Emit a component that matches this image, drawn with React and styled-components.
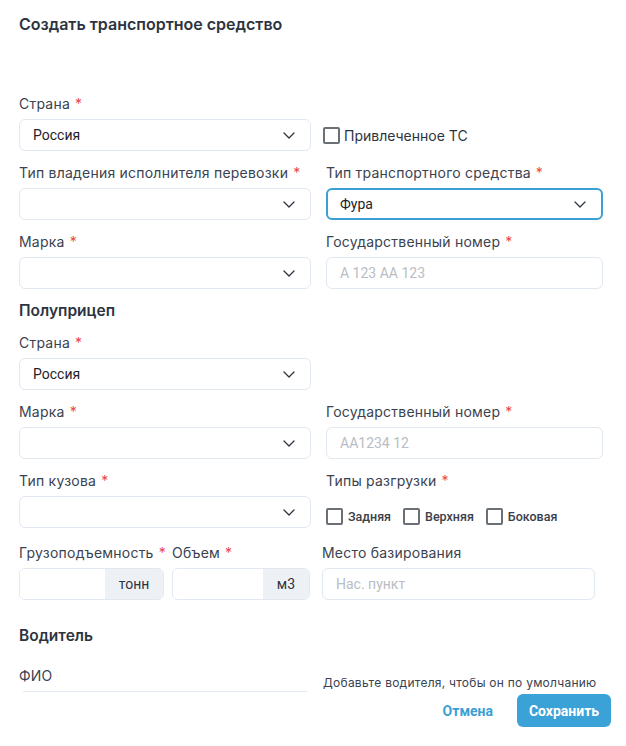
import React from "react";
import styled, { createGlobalStyle } from "styled-components";

const Global = createGlobalStyle`
  html, body { margin: 0; padding: 0; background: #fff; }
  body { font-family: Roboto, "Noto Sans", Arial, sans-serif; }
  * { box-sizing: border-box; }
`;

const Page = styled.div`
  width: 626px;
  height: 746px;
  display: flex;
  flex-direction: column;
  background: #fff;
  overflow: hidden;
`;

const Title = styled.h1`
  margin: 0;
  padding: 14px 19px 0;
  font-family: Inter, Roboto, sans-serif;
  font-size: 16px;
  line-height: 20px;
  font-weight: 600;
  color: #2d3440;
`;

const Body = styled.div`
  flex: 1;
  overflow: hidden;
  padding: 60px 23px 0 19px;
  display: flex;
  flex-direction: column;
  gap: 12px;
`;

const Row = styled.div`
  display: grid;
  grid-template-columns: ${(p) => p.$cols || "292px 277px"};
  column-gap: ${(p) => p.$gap || "15px"};
`;

const Field = styled.div`
  display: flex;
  flex-direction: column;
  min-width: 0;
`;

const Label = styled.label`
  display: block;
  font-family: Inter, Roboto, sans-serif;
  font-size: 14px;
  line-height: 20px;
  letter-spacing: 0.22px;
  color: #3b4250;
  margin-bottom: 5px;
  white-space: nowrap;
`;

const Star = styled.span`
  color: #e5484d;
  margin-left: 5px;
`;

const SelectBox = styled.div`
  height: 32px;
  border: ${(p) => (p.$focused ? "2px solid #3a9fd5" : "1px solid #e2e8f0")};
  border-radius: 6px;
  display: flex;
  align-items: center;
  justify-content: space-between;
  padding: 0 15px 0 ${(p) => (p.$focused ? "12px" : "13px")};
  font-size: 14px;
  color: #1f2329;
  background: #fff;
`;

const TextInput = styled.input`
  height: 32px;
  width: 100%;
  border: 1px solid #e2e8f0;
  border-radius: 6px;
  padding: 0 13px;
  font-family: inherit;
  font-size: 14px;
  color: #1f2329;
  outline: none;
  &::placeholder { color: #b9bdc5; }
`;

const Group = styled.div`
  height: 32px;
  display: flex;
  border: 1px solid #e2e8f0;
  border-radius: 6px;
  overflow: hidden;
`;

const GroupInput = styled.input`
  flex: 1;
  min-width: 0;
  border: none;
  outline: none;
  padding: 0 12px;
  font-family: inherit;
  font-size: 14px;
`;

const Addon = styled.div`
  width: ${(p) => p.$w}px;
  background: #edf1f6;
  display: flex;
  align-items: center;
  justify-content: center;
  font-size: 14px;
  color: #2d3440;
`;

const CheckCell = styled.div`
  display: flex;
  align-items: ${(p) => (p.$bottom ? "flex-end" : "center")};
  height: ${(p) => (p.$bottom ? "35px" : "32px")};
  padding-bottom: ${(p) => (p.$bottom ? "6px" : "0")};
  margin-left: ${(p) => p.$shift || "0"};
  gap: 12px;
`;

const CheckLabel = styled.label`
  display: inline-flex;
  align-items: center;
  gap: ${(p) => (p.$small ? "5px" : "4px")};
  font-family: ${(p) => (p.$small ? "Roboto, sans-serif" : "Inter, Roboto, sans-serif")};
  font-size: ${(p) => (p.$small ? "12.5px" : "14px")};
  font-weight: ${(p) => (p.$small ? 500 : 400)};
  color: ${(p) => (p.$small ? "#3a404b" : "#2d3440")};
  cursor: pointer;
`;

const Box = styled.span`
  width: 17px;
  height: 17px;
  border: 2px solid #6b6f76;
  border-radius: 2px;
  display: inline-block;
  flex: none;
`;

const SectionTitle = styled.h2`
  margin: ${(p) => p.$mt || "0"} 0 ${(p) => p.$mb || "0"};
  font-family: Inter, Roboto, sans-serif;
  font-size: 15.5px;
  line-height: 20px;
  font-weight: 600;
  color: #2d3440;
`;

const Hint = styled.div`
  padding-top: 9px;
  font-family: Inter, Roboto, sans-serif;
  font-size: 12px;
  line-height: 16px;
  letter-spacing: 0.25px;
  color: #3b4250;
  white-space: nowrap;
`;

const Footer = styled.div`
  height: 54px;
  display: flex;
  justify-content: flex-end;
  align-items: flex-start;
  padding: 2px 15px 0 0;
  gap: 24px;
`;

const LinkButton = styled.button`
  height: 33px;
  border: none;
  background: none;
  padding: 0;
  font-family: inherit;
  font-size: 14px;
  font-weight: 700;
  color: #3a9fd5;
  cursor: pointer;
`;

const PrimaryButton = styled.button`
  height: 33px;
  width: 94px;
  border: none;
  border-radius: 6px;
  background: #3ba2d7;
  color: #fff;
  font-family: inherit;
  font-size: 14px;
  font-weight: 700;
  cursor: pointer;
`;

const Chevron = () => (
  <svg width="12" height="7" viewBox="0 0 12 7" fill="none">
    <path d="M1 1l5 5 5-5" stroke="#2d3440" strokeWidth="1.3" strokeLinecap="round" strokeLinejoin="round" />
  </svg>
);

const Select = ({ value, focused }) => (
  <SelectBox $focused={focused}>
    <span>{value}</span>
    <Chevron />
  </SelectBox>
);

const Req = ({ children }) => (
  <Label>
    {children}
    <Star>*</Star>
  </Label>
);

export default function App() {
  return (
    <>
      <Global />
      <Page>
        <Title>Создать транспортное средство</Title>
        <Body>
          <Row>
            <Field>
              <Req>Страна</Req>
              <Select value="Россия" />
            </Field>
            <Field>
              <Label>&nbsp;</Label>
              <CheckCell $shift="-3px">
                <CheckLabel>
                  <Box />
                  Привлеченное ТС
                </CheckLabel>
              </CheckCell>
            </Field>
          </Row>
          <Row>
            <Field>
              <Req>Тип владения исполнителя перевозки</Req>
              <Select value="" />
            </Field>
            <Field>
              <Req>Тип транспортного средства</Req>
              <Select value="Фура" focused />
            </Field>
          </Row>
          <Row>
            <Field>
              <Req>Марка</Req>
              <Select value="" />
            </Field>
            <Field>
              <Req>Государственный номер</Req>
              <TextInput placeholder="А 123 АА 123" />
            </Field>
          </Row>
          <SectionTitle>Полуприцеп</SectionTitle>
          <Row>
            <Field>
              <Req>Страна</Req>
              <Select value="Россия" />
            </Field>
          </Row>
          <Row>
            <Field>
              <Req>Марка</Req>
              <Select value="" />
            </Field>
            <Field>
              <Req>Государственный номер</Req>
              <TextInput placeholder="АА1234 12" />
            </Field>
          </Row>
          <Row>
            <Field>
              <Req>Тип кузова</Req>
              <Select value="" />
            </Field>
            <Field>
              <Req>Типы разгрузки</Req>
              <CheckCell $bottom>
                <CheckLabel $small>
                  <Box />
                  Задняя
                </CheckLabel>
                <CheckLabel $small>
                  <Box />
                  Верхняя
                </CheckLabel>
                <CheckLabel $small>
                  <Box />
                  Боковая
                </CheckLabel>
              </CheckCell>
            </Field>
          </Row>
          <Row $cols="291px 273px" $gap="12px">
            <Row $cols="145px 138px" $gap="8px">
              <Field>
                <Req>Грузоподъемность</Req>
                <Group>
                  <GroupInput />
                  <Addon $w={58}>тонн</Addon>
                </Group>
              </Field>
              <Field>
                <Req>Объем</Req>
                <Group>
                  <GroupInput />
                  <Addon $w={46}>м3</Addon>
                </Group>
              </Field>
            </Row>
            <Field>
              <Label>Место базирования</Label>
              <TextInput placeholder="Нас. пункт" />
            </Field>
          </Row>
          <SectionTitle $mt="14px" $mb="8px">Водитель</SectionTitle>
          <Row $cols="292px 277px" $gap="12px">
            <Field>
              <Label>ФИО</Label>
              <Select value="" />
            </Field>
            <Hint>Добавьте водителя, чтобы он по умолчанию</Hint>
          </Row>
        </Body>
        <Footer>
          <LinkButton>Отмена</LinkButton>
          <PrimaryButton>Сохранить</PrimaryButton>
        </Footer>
      </Page>
    </>
  );
}
